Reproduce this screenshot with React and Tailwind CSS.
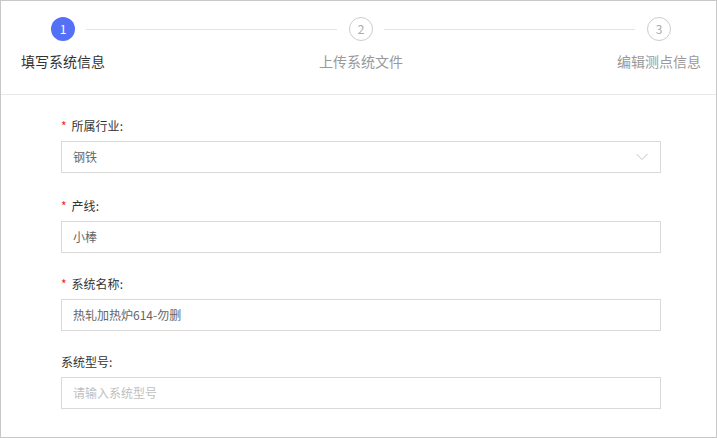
import React from "react";

const steps = [
  { no: 1, title: "填写系统信息" },
  { no: 2, title: "上传系统文件" },
  { no: 3, title: "编辑测点信息" },
];

const fields = [
  { label: "所属行业", required: true, value: "钢铁", select: true },
  { label: "产线", required: true, value: "小棒" },
  { label: "系统名称", required: true, value: "热轧加热炉614-勿删" },
  { label: "系统型号", required: false, placeholder: "请输入系统型号" },
];

const StepCircle = ({ no, active }) => {
  if (active) {
    return (
      <div className="w-6 h-6 rounded-full bg-[#5470f7] text-white text-[12px] leading-none flex items-center justify-center shrink-0">
        {no}
      </div>
    );
  }
  return (
    <div className="w-6 h-6 rounded-full border border-[#cccccc] text-[#aaaaaa] text-[12px] leading-none flex items-center justify-center shrink-0">
      {no}
    </div>
  );
};

const Steps = () => {
  return (
    <div className="border-b border-[#e8e8e8] pt-4 pb-[23px]">
      <div className="flex items-center pl-[50px] pr-[45px]">
        <StepCircle no={1} active />
        <div className="flex-1 h-px bg-[#e4e4e4] ml-[11px] mr-3" />
        <StepCircle no={2} />
        <div className="flex-1 h-px bg-[#e4e4e4] ml-[11px] mr-3" />
        <StepCircle no={3} />
      </div>
      <div className="flex justify-between pl-5 pr-[15px] mt-[10px]">
        {steps.map((s, i) => (
          <div
            key={s.no}
            className={
              "w-[84px] text-center text-[14px] leading-5 whitespace-nowrap " +
              (i === 0 ? "text-[#333333]" : "text-[#999999]")
            }
          >
            {s.title}
          </div>
        ))}
      </div>
    </div>
  );
};

const Field = ({ field, first }) => {
  return (
    <div className={first ? "mb-[23px]" : "mb-[21px]"}>
      <div className="flex items-center text-[12px] leading-5 text-[#333333] mb-[5px]">
        {field.required && <span className="text-[#f5222d] mr-[5px]">*</span>}
        <span>{field.label}:</span>
      </div>
      <div className="relative h-8 border border-[#d9d9d9] bg-white flex items-center pl-[11px] pr-3 text-[12px]">
        {field.value ? (
          <span className="text-[#666666]">{field.value}</span>
        ) : (
          <span className="text-[#c0c0c0]">{field.placeholder}</span>
        )}
        {field.select && (
          <svg
            className="absolute right-3 top-[11px]"
            width="12"
            height="8"
            viewBox="0 0 12 8"
            fill="none"
          >
            <polyline points="0.5,1 6,6.5 11.5,1" stroke="#c4c4c4" strokeWidth="1" />
          </svg>
        )}
      </div>
    </div>
  );
};

export default function App() {
  return (
    <div
      className="w-[717px] h-[438px] bg-white border border-[#c8c8c8] overflow-hidden"
      style={{ fontFamily: '"Noto Sans CJK SC", "Noto Sans", sans-serif' }}
    >
      <Steps />
      <div className="pt-[21px] pl-[60px] w-[660px]">
        {fields.map((f, i) => (
          <Field key={f.label} field={f} first={i === 0} />
        ))}
      </div>
    </div>
  );
}
